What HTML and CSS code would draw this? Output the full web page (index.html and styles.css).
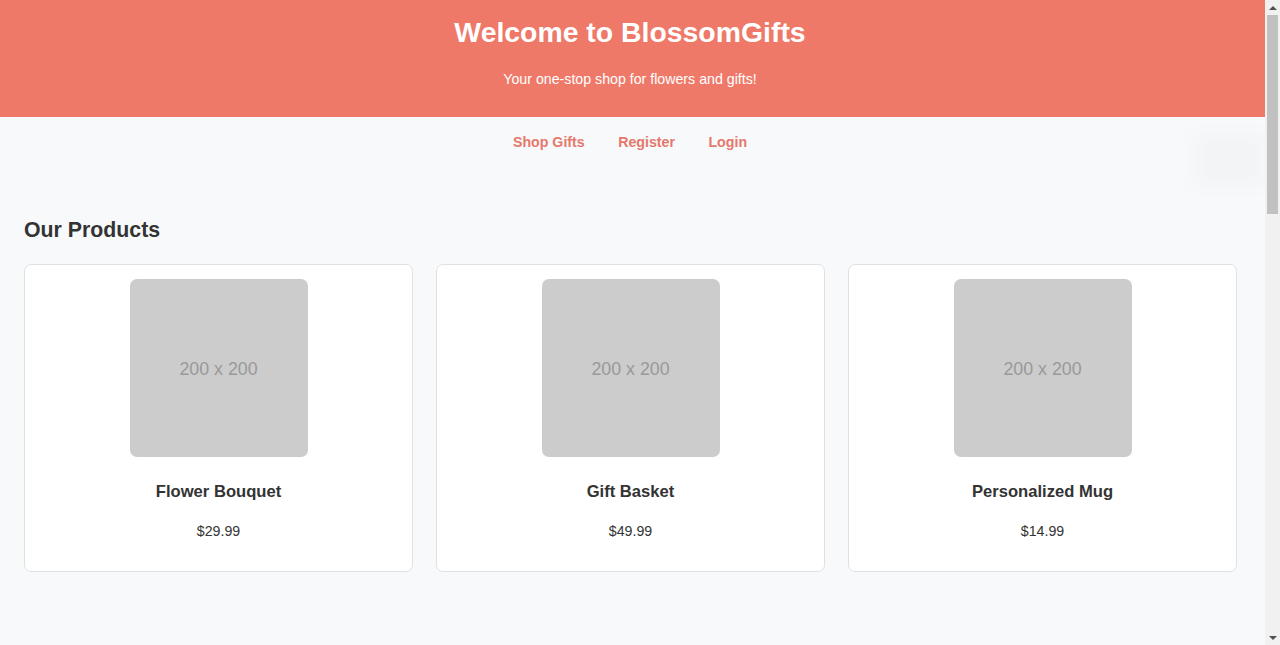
FILE: index.html
```html
<!DOCTYPE html>
<html lang="en">
<head>
<meta charset="utf-8">
<title>BlossomGifts</title>
<link rel="stylesheet" href="styles.css">
</head>
<body>
<div class="page">
  <header class="site-header">
    <h1 class="site-title">Welcome to BlossomGifts</h1>
    <p class="site-tagline">Your one-stop shop for flowers and gifts!</p>
  </header>
  <nav class="site-nav">
    <a href="#" class="nav-link">Shop Gifts</a>
    <a href="#" class="nav-link">Register</a>
    <a href="#" class="nav-link">Login</a>
  </nav>
  <div class="ghost"></div>
  <main class="products">
    <h2 class="section-title">Our Products</h2>
    <div class="product-grid">
      <div class="product-card">
        <div class="placeholder">200 x 200</div>
        <h3 class="product-name">Flower Bouquet</h3>
        <p class="product-price">$29.99</p>
      </div>
      <div class="product-card">
        <div class="placeholder">200 x 200</div>
        <h3 class="product-name">Gift Basket</h3>
        <p class="product-price">$49.99</p>
      </div>
      <div class="product-card">
        <div class="placeholder">200 x 200</div>
        <h3 class="product-name">Personalized Mug</h3>
        <p class="product-price">$14.99</p>
      </div>
    </div>
  </main>
</div>
<div class="scrollbar" aria-hidden="true">
  <div class="scroll-arrow scroll-arrow-up"></div>
  <div class="scroll-track">
    <div class="scroll-thumb"></div>
  </div>
  <div class="scroll-arrow scroll-arrow-down"></div>
</div>
</body>
</html>
```
FILE: styles.css
```css
html, body {
  margin: 0;
  padding: 0;
}
body {
  background: #f8f9fa;
  font-family: "Liberation Sans", Arial, sans-serif;
  color: #333;
}
.page {
  position: relative;
  width: calc(100% - 15px);
  min-height: 1975px;
}
.site-header {
  background: #ef7969;
  color: #fff;
  text-align: center;
  padding: 16px 5px 30px 0;
  height: 117px;
  box-sizing: border-box;
}
.site-title {
  margin: 0;
  font-size: 28.4px;
  font-weight: bold;
  line-height: 32.6px;
}
.site-tagline {
  margin: 22px 0 0;
  font-size: 14.2px;
  line-height: 16.3px;
}
.site-nav {
  display: flex;
  justify-content: center;
  gap: 33.5px;
  padding: 17px 5px 18px 0;
}
.nav-link {
  color: #e5786c;
  font-weight: bold;
  font-size: 14.2px;
  line-height: 16.3px;
  text-decoration: none;
}
.ghost {
  position: absolute;
  top: 134px;
  right: 0;
  width: 72px;
  height: 52px;
  background: rgba(0, 0, 0, 0.018);
  filter: blur(9px);
}
.products {
  padding: 50px 28px 0 24px;
}
.section-title {
  margin: 0 0 21px;
  font-size: 21.3px;
  line-height: 24.5px;
  font-weight: bold;
  color: #333;
}
.product-grid {
  display: grid;
  grid-template-columns: repeat(3, 1fr);
  gap: 23px;
}
.product-card {
  background: #fff;
  border: 1px solid #dfe1e3;
  border-radius: 7px;
  padding: 14px;
  text-align: center;
}
.placeholder {
  width: 178px;
  height: 178px;
  box-sizing: border-box;
  padding-top: 3px;
  margin: 0 auto;
  background: #cccccc;
  border-radius: 7px;
  color: #999;
  font-size: 17.8px;
  display: flex;
  align-items: center;
  justify-content: center;
}
.product-name {
  margin: 25.3px 0 0;
  font-size: 16.6px;
  line-height: 19.1px;
  font-weight: bold;
  color: #333;
}
.product-price {
  margin: 21.6px 0 17.7px;
  font-size: 14.2px;
  line-height: 16.3px;
  color: #333;
}
.scrollbar {
  position: fixed;
  top: 0;
  right: 0;
  bottom: 0;
  width: 15px;
  background: #f1f1f1;
  display: flex;
  flex-direction: column;
}
.scroll-arrow {
  height: 15px;
  flex: none;
  display: flex;
  align-items: center;
  justify-content: center;
}
.scroll-arrow::before {
  content: "";
  width: 0;
  height: 0;
  border-left: 4px solid transparent;
  border-right: 4px solid transparent;
}
.scroll-arrow-up::before {
  border-bottom: 4px solid #505050;
}
.scroll-arrow-down::before {
  border-top: 4px solid #505050;
}
.scroll-track {
  flex: 1;
  padding: 0 2px;
}
.scroll-thumb {
  height: 199px;
  background: #c1c1c1;
}
```
